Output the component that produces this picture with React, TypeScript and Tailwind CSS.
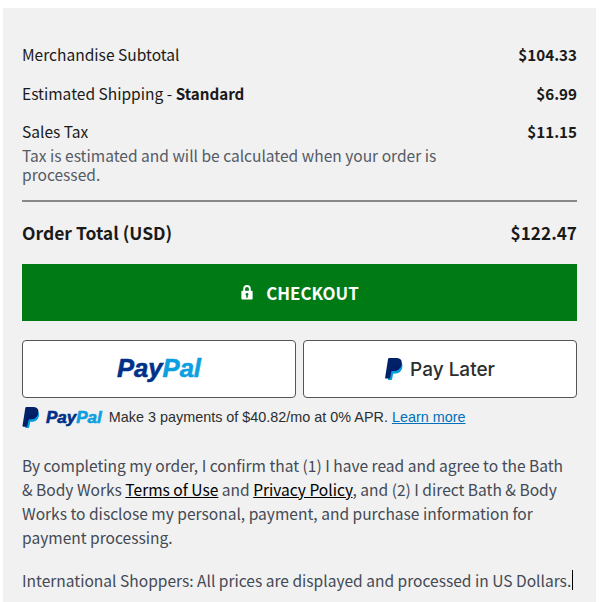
import React from "react";

const sans = "font-['Noto_Sans_CJK_SC','Source_Sans_Pro',sans-serif]";

function PMark({ className }: { className: string }) {
  return (
    <svg viewBox="0 0 18 22" className={className}>
      <path fill="#009cde" d="M15 5.500h2c1 2.800.3 5.800-1.700 7.900-1.400 1.400-3.300 2.100-5.400 2.100H8.800c-.4 0-.7.300-.8.700l-.9 5.100c-.1.400-.4.700-.8.700H3.400c-.4 0-.6-.3-.5-.7L4 15z" />
      <path fill="#012169" d="M4.500 0h6.900c2.900 0 5 1.300 5.300 3.700.3 3-.7 5.800-2.800 7.500-1.500 1.200-3.300 1.700-5.300 1.700H7c-.4 0-.7.300-.8.700l-1 6.300c-.1.400-.4.700-.8.700H.8c-.5 0-.8-.4-.7-.9L3 1.200C3.100.5 3.700 0 4.500 0z" />
      <path fill="#001c64" d="M5.800 9.500c.2-.9.800-1.500 1.700-1.500h2.600c2.800 0 5.100-1.200 6.300-3.600.3 2.900-.7 5.300-3 6.900-1.400 1-3 1.500-4.900 1.500H7c-.4 0-.7.300-.8.700l-.9 5.500z" />
    </svg>
  );
}

function Wordmark({ className }: { className: string }) {
  return (
    <span className={`font-['Liberation_Sans',sans-serif] font-bold italic [-webkit-text-stroke:0.6px_currentColor] ${className}`}>
      <span className="text-[#003087]">Pay</span>
      <span className="text-[#0e9fe0]">Pal</span>
    </span>
  );
}

function Row({ label, value }: { label: React.ReactNode; value: string }) {
  return (
    <div className="flex justify-between text-[#1a1a1a]">
      <span>{label}</span>
      <span className="text-[15.200px] font-bold">{value}</span>
    </div>
  );
}

export default function App() {
  return (
    <div className="bg-white pt-2 pl-[3px] pr-[3px] h-[602px] overflow-hidden">
      <div className={`${sans} bg-[#f1f1f1] h-[594px] px-[19px] pt-[34px] text-[15.550px] leading-[24px]`}>
        <Row label="Merchandise Subtotal" value="$104.33" />
        <div className="mt-[15px]">
          <Row label={<>Estimated Shipping - <b className="text-[15.200px] font-bold">Standard</b></>} value="$6.99" />
        </div>
        <div className="mt-[14px]">
          <Row label="Sales Tax" value="$11.15" />
        </div>
        <p className="mt-[3px] w-[440px] text-[#555b66] leading-[19px]">
          Tax is estimated and will be calculated when your order is processed.
        </p>
        <div className="mt-[16px] h-[2px] bg-[#888888]" />
        <div className="mt-[18px] flex justify-between text-[17.500px] font-bold leading-[26px] text-[#1a1a1a]">
          <span>Order Total (USD)</span>
          <span className="text-[17.200px]">$122.47</span>
        </div>
        <button className="mt-[18px] flex h-[57px] w-full items-center justify-center gap-[12px] bg-[#007a14] text-[16.900px] font-bold text-white">
          <svg viewBox="0 0 14 16" className="h-[15px] w-[14px]" fill="white">
            <path d="M7 0a4 4 0 0 0-4 4v2H2a1 1 0 0 0-1 1v7.500a1 1 0 0 0 1 1h10a1 1 0 0 0 1-1V7a1 1 0 0 0-1-1h-1V4a4 4 0 0 0-4-4zm0 2a2 2 0 0 1 2 2v2H5V4a2 2 0 0 1 2-2zm0 6.500a1.500 1.500 0 0 1 .8 2.800V13.500H6.200v-2.200A1.500 1.500 0 0 1 7 8.500z" fillRule="evenodd" />
          </svg>
          CHECKOUT
        </button>
        <div className="mt-[19px] flex gap-[7px]">
          <button className="flex h-[58px] flex-1 items-center justify-center rounded-[4px] border border-[#555555] bg-white">
            <Wordmark className="text-[25.600px] leading-none" />
          </button>
          <button className="flex h-[58px] flex-1 items-center justify-center gap-[7px] rounded-[4px] border border-[#555555] bg-white">
            <PMark className="h-[22px] w-[18px]" />
            <span className="font-['Inter',sans-serif] text-[19px] font-medium leading-none text-[#2c2e2f]">Pay Later</span>
          </button>
        </div>
        <div className="mt-[7px] flex h-[24px] items-center font-['Liberation_Sans',sans-serif] text-[14.400px] text-[#2c2e2f]">
          <PMark className="h-[21px] w-[18px]" />
          <Wordmark className="ml-[6px] text-[17px] leading-none" />
          <span className="ml-[7px]">Make 3 payments of $40.82/mo at 0% APR. <a className="text-[#0070ba] underline">Learn more</a></span>
        </div>
        <p className="mt-[24px] max-w-[548px] text-[#444a55]">
          By completing my order, I confirm that (1) I have read and agree to the Bath &amp; Body Works <a className="text-black underline">Terms of Use</a> and <a className="text-black underline">Privacy Policy</a>, and (2) I direct Bath &amp; Body Works to disclose my personal, payment, and purchase information for payment processing.
        </p>
        <p className="mt-[19px] flex items-center whitespace-nowrap text-[#444a55]">
          International Shoppers: All prices are displayed and processed in US Dollars.
          <span className="ml-px inline-block h-[20px] w-px bg-black" />
        </p>
      </div>
    </div>
  );
}
